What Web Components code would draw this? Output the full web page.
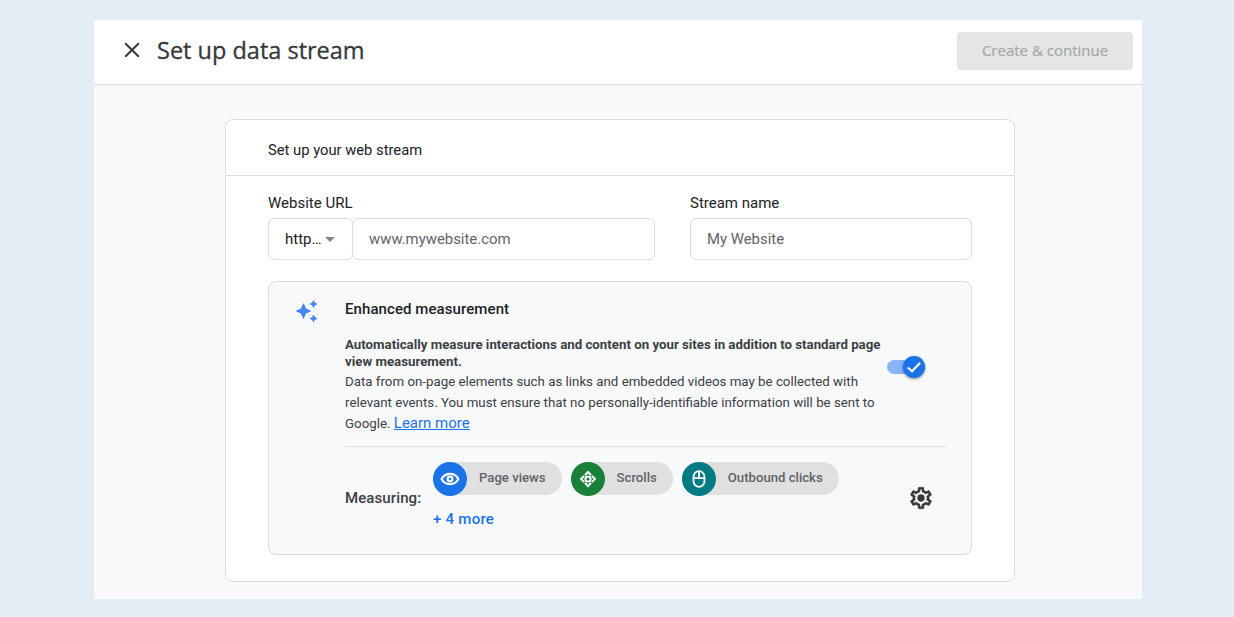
<!DOCTYPE html>
<html lang="en">
<head>
<meta charset="utf-8">
<title>Set up data stream</title>
<style>
  html, body { margin: 0; height: 100%; }
  body { background: #e4ecf6; font-family: Roboto, "Liberation Sans", sans-serif; overflow: hidden; }
</style>
</head>
<body>
<ga-page>
  <ga-header slot="header" title-text="Set up data stream" action="Create &amp; continue"></ga-header>
  <ga-card card-title="Set up your web stream">
    <div style="display:grid;grid-template-columns:387px 282px;column-gap:35px">
      <ga-field label="Website URL">
        <ga-select value="http…"></ga-select>
        <ga-input placeholder="www.mywebsite.com" style="flex:1;margin-left:-1px"></ga-input>
      </ga-field>
      <ga-field label="Stream name">
        <ga-input placeholder="My Website" style="flex:1"></ga-input>
      </ga-field>
    </div>
    <ga-measurement></ga-measurement>
  </ga-card>
</ga-page>

<script>
class GaPage extends HTMLElement {
  constructor() {
    super();
    this.attachShadow({ mode: 'open' });
    this.shadowRoot.innerHTML = `
      <style>
        :host { display: block; padding: 20px 92px 18px 94px; height: 579px; }
        .panel { height: 100%; background: #f8f9fb; display: flex; flex-direction: column; }
        .body { padding: 34px 127px 0 131px; }
      </style>
      <div class="panel">
        <slot name="header"></slot>
        <div class="body"><slot></slot></div>
      </div>
    `;
  }
}

class GaHeader extends HTMLElement {
  constructor() {
    super();
    this.attachShadow({ mode: 'open' });
  }

  connectedCallback() {
    const title = this.getAttribute('title-text');
    const action = this.getAttribute('action');
    this.shadowRoot.innerHTML = `
      <style>
        :host { display: block; }
        .bar {
          height: 64px;
          background: #fff;
          border-bottom: 1px solid #dadce0;
          display: flex;
          align-items: center;
          padding: 0 9px 0 25px;
        }
        svg { width: 26px; height: 26px; display: block; fill: #3c4043; margin-bottom: 4px; }
        h1 {
          margin: 0 0 5px 12px;
          font: 400 23.5px "Open Sans", Roboto, sans-serif;
          -webkit-text-stroke: .3px #35383b;
          color: #35383b;
          flex: 1;
        }
        button {
          width: 176px;
          height: 38px;
          margin-bottom: 2px;
          border: 0;
          border-radius: 4px;
          background: #e4e6e6;
          color: #a5a7a8;
          font: 500 15px "Open Sans", Roboto, sans-serif;
          -webkit-text-stroke: .2px #a5a7a8;
          padding: 0 0 2px;
        }
      </style>
      <div class="bar">
        <svg viewBox="0 0 24 24"><path d="M19 6.410 17.590 5 12 10.590 6.410 5 5 6.410 10.590 12 5 17.590 6.410 19 12 13.410 17.590 19 19 17.590 13.410 12z"/></svg>
        <h1>${title}</h1>
        <button disabled>${action}</button>
      </div>
    `;
  }
}

class GaCard extends HTMLElement {
  constructor() {
    super();
    this.attachShadow({ mode: 'open' });
  }

  connectedCallback() {
    this.shadowRoot.innerHTML = `
      <style>
        :host { display: block; }
        .card {
          background: #fff;
          border: 1px solid #dadce0;
          border-radius: 8px;
          height: 461px;
        }
        .head {
          height: 56px;
          box-sizing: border-box;
          display: flex;
          align-items: center;
          padding: 4px 42px 0;
          border-bottom: 1px solid #dadce0;
          font-size: 14.75px;
          color: #202124;
        }
        .content { padding: 18px 42px 0; }
      </style>
      <div class="card">
        <div class="head">${this.getAttribute('card-title')}</div>
        <div class="content"><slot></slot></div>
      </div>
    `;
  }
}

class GaField extends HTMLElement {
  constructor() {
    super();
    this.attachShadow({ mode: 'open' });
  }

  connectedCallback() {
    this.shadowRoot.innerHTML = `
      <style>
        :host { display: block; }
        label { display: block; font-size: 15px; line-height: 18px; color: #202124; margin-bottom: 6px; }
        .row { display: flex; }
      </style>
      <label>${this.getAttribute('label')}</label>
      <div class="row"><slot></slot></div>
    `;
  }
}

class GaSelect extends HTMLElement {
  constructor() {
    super();
    this.attachShadow({ mode: 'open' });
  }

  connectedCallback() {
    this.shadowRoot.innerHTML = `
      <style>
        :host { display: block; position: relative; z-index: 1; }
        .box {
          width: 85px;
          height: 42px;
          box-sizing: border-box;
          background: #fff;
          border: 1px solid #dadce0;
          border-radius: 6px;
          display: flex;
          align-items: center;
          padding-left: 16px;
          font-size: 15px;
          color: #202124;
        }
        span { width: 37px; flex: none; }
        i { width: 0; height: 0; margin-left: 3px; border: 5px solid transparent; border-top-color: #80868b; border-bottom: 0; }
      </style>
      <div class="box"><span>${this.getAttribute('value')}</span><i></i></div>
    `;
  }
}

class GaInput extends HTMLElement {
  constructor() {
    super();
    this.attachShadow({ mode: 'open' });
  }

  connectedCallback() {
    this.shadowRoot.innerHTML = `
      <style>
        :host { display: block; }
        .box {
          height: 42px;
          box-sizing: border-box;
          background: #fff;
          border: 1px solid #dadce0;
          border-radius: 6px;
          display: flex;
          align-items: center;
          padding-left: 16px;
          font-size: 14.9px;
          color: #5f6368;
        }
      </style>
      <div class="box">${this.getAttribute('placeholder')}</div>
    `;
  }
}

class GaToggle extends HTMLElement {
  constructor() {
    super();
    this.attachShadow({ mode: 'open' });
    this.shadowRoot.innerHTML = `
      <style>
        :host { display: block; position: relative; width: 38px; height: 22px; }
        .track { position: absolute; left: 0; top: 4px; width: 34px; height: 14px; border-radius: 7px; background: #8ab4f8; }
        .knob {
          position: absolute; right: 0; top: 0; width: 22px; height: 22px; border-radius: 50%;
          background: #1a73e8; box-shadow: 0 1px 3px rgba(0,0,0,.45);
          display: flex; align-items: center; justify-content: center;
        }
        svg { width: 16px; height: 16px; fill: none; stroke: #fff; stroke-width: 2.2; }
      </style>
      <div class="track"></div>
      <div class="knob"><svg viewBox="0 0 16 16"><path d="M1.800 8.500 6 12.300 14.200 3.800"/></svg></div>
    `;
  }
}

class GaChip extends HTMLElement {
  constructor() {
    super();
    this.attachShadow({ mode: 'open' });
  }

  connectedCallback() {
    this.shadowRoot.innerHTML = `
      <style>
        :host { display: block; }
        .chip {
          height: 33px;
          border-radius: 17px;
          background: #e0e0e0;
          display: flex;
          align-items: center;
          padding-right: 16px;
          font-size: 13.15px;
          font-weight: 500;
          color: #5f6368;
        }
        .icon {
          width: 34px; height: 34px; border-radius: 50%;
          display: flex; align-items: center; justify-content: center;
          margin-right: 12px;
          background: ${this.getAttribute('color')};
        }
        ::slotted(svg) { display: block; width: 24px; height: 24px; }
        span { margin-top: -2px; }
      </style>
      <div class="chip">
        <div class="icon"><slot></slot></div>
        <span>${this.getAttribute('label')}</span>
      </div>
    `;
  }
}

class GaMeasurement extends HTMLElement {
  constructor() {
    super();
    this.attachShadow({ mode: 'open' });
    this.shadowRoot.innerHTML = `
      <style>
        :host { display: block; margin-top: 21px; }
        .panel {
          height: 272px;
          background: #f8f9fb;
          border: 1px solid #dadce0;
          border-radius: 8px;
          display: flex;
          padding: 0 25px 0 25px;
        }
        .spark { width: 26px; height: 26px; margin-top: 17px; margin-right: 25px; flex: none; fill: #4285f4; }
        .main { flex: 1; padding-top: 18px; min-width: 0; }
        h2 { margin: 0; font-size: 15px; line-height: 18px; font-weight: 500; letter-spacing: .08px; color: #202124; }
        .desc { display: flex; align-items: flex-start; margin-top: 18px; }
        .text { width: 540px; flex: none; font-size: 13.3px; line-height: 21px; color: #3c4043; }
        .text b { display: block; font-size: 13.27px; line-height: 17px; font-weight: 700; margin-bottom: 1px; }
        .text a { font-size: 15px; color: #1a73e8; text-decoration: underline; }
        ga-toggle { margin: 20px 0 0 2px; }
        hr { border: 0; border-top: 1px solid #dadce0; margin: 12px 0 0; }
        .measuring { display: flex; align-items: center; margin-top: 15px; }
        .label { font-size: 15px; font-weight: 500; letter-spacing: .1px; color: #3c4043; width: 88px; flex: none; margin-top: 6px; }
        .chips { display: flex; gap: 9px; }
        .more { margin-top: 15px; font-size: 15px; font-weight: 500; letter-spacing: .25px; color: #1a73e8; line-height: 18px; }
        .gear { width: 26px; height: 26px; fill: #35383b; stroke: #35383b; stroke-width: .4; margin: 6px 12px 0 auto; flex: none; }
      </style>
      <div class="panel">
        <svg class="spark" viewBox="0 0 26 26">
          <path d="M9.500 4 12.100 9.400 17.500 12 12.100 14.600 9.500 20 6.900 14.600 1.500 12 6.900 9.400z"/>
          <path d="M19.500 1 20.900 3.600 23.500 5 20.900 6.400 19.500 9 18.100 6.400 15.500 5 18.100 3.600z"/>
          <path d="M19.500 15.500 20.900 18.100 23.500 19.500 20.900 20.900 19.500 23.500 18.100 20.900 15.500 19.500 18.100 18.100z"/>
        </svg>
        <div class="main">
          <h2>Enhanced measurement</h2>
          <div class="desc">
            <div class="text">
              <b>Automatically measure interactions and content on your sites in addition to standard page view measurement.</b>
              <span>Data from on-page elements such as links and embedded videos may be collected with relevant events. You must ensure that no personally-identifiable information will be sent to</span>
              <span>Google.</span> <a>Learn more</a>
            </div>
            <ga-toggle></ga-toggle>
          </div>
          <hr>
          <div class="measuring">
            <div class="label">Measuring:</div>
            <div>
              <div class="chips">
                <ga-chip label="Page views" color="#1a73e8">
                  <svg viewBox="0 0 24 24" fill="none" stroke="#fff" stroke-width="2.100"><path d="M3.600 12C5.400 8.500 8.500 6.900 12 6.900s6.600 1.600 8.400 5.100c-1.800 3.500-4.900 5.100-8.400 5.100S5.400 15.500 3.600 12z"/><circle cx="12" cy="12" r="2.400"/></svg>
                </ga-chip>
                <ga-chip label="Scrolls" color="#188038">
                  <svg viewBox="0 0 24 24" fill="none" stroke="#fff" stroke-width="2"><path d="M8.900 8.100 12 5 15.100 8.100M15.900 8.900 19 12 15.900 15.100M15.100 15.900 12 19 8.900 15.900M8.100 15.100 5 12 8.100 8.900"/><circle cx="12" cy="12" r="2.600"/></svg>
                </ga-chip>
                <ga-chip label="Outbound clicks" color="#007b83">
                  <svg viewBox="0 0 24 24" fill="none" stroke="#fff" stroke-width="1.800"><rect x="6.500" y="4.200" width="11" height="15.600" rx="5.500"/><path d="M12 4.200V11M6.500 11.200H17.500"/></svg>
                </ga-chip>
              </div>
              <div class="more">+ 4 more</div>
            </div>
            <svg class="gear" viewBox="0 0 24 24"><path d="M19.430 12.980c.04-.32.07-.64.07-.98s-.03-.66-.07-.98l2.110-1.650c.19-.15.24-.42.12-.64l-2-3.460c-.12-.22-.39-.3-.61-.22l-2.490 1c-.52-.4-1.080-.73-1.690-.98l-.38-2.650A.488.488 0 0 0 14 2h-4c-.25 0-.46.18-.49.42l-.38 2.650c-.61.25-1.170.59-1.690.98l-2.490-1c-.23-.09-.49 0-.61.22l-2 3.460c-.13.22-.07.49.12.64l2.110 1.650c-.04.32-.07.65-.07.98s.03.66.07.98l-2.110 1.650c-.19.15-.24.42-.12.64l2 3.460c.12.22.39.3.61.22l2.490-1c.52.4 1.080.73 1.690.98l.38 2.650c.03.24.24.42.49.42h4c.25 0 .46-.18.49-.42l.38-2.650c.61-.25 1.170-.59 1.690-.98l2.490 1c.23.09.49 0 .61-.22l2-3.460c.12-.22.07-.49-.12-.64l-2.110-1.650zM17.450 11.270c.04.31.05.52.05.73s-.02.43-.05.73l-.14 1.130.89.7 1.080.84-.7 1.210-1.270-.51-1.040-.42-.9.68c-.43.32-.84.56-1.250.73l-1.060.43-.16 1.130-.2 1.350h-1.400l-.19-1.350-.16-1.130-1.060-.43c-.43-.18-.83-.41-1.230-.71l-.91-.7-1.060.43-1.270.51-.7-1.210 1.080-.84.89-.7-.14-1.130c-.03-.31-.05-.54-.05-.74s.02-.43.05-.73l.14-1.130-.89-.7-1.080-.84.7-1.210 1.270.51 1.040.42.9-.68c.43-.32.84-.56 1.250-.73l1.060-.43.16-1.130.2-1.350h1.390l.19 1.350.16 1.130 1.060.43c.43.18.83.41 1.230.71l.91.7 1.060-.43 1.270-.51.7 1.210-1.070.85-.89.7.14 1.130z"/><circle cx="12" cy="12" r="3.200"/></svg>
          </div>
        </div>
      </div>
    `;
  }
}

customElements.define('ga-page', GaPage);
customElements.define('ga-header', GaHeader);
customElements.define('ga-card', GaCard);
customElements.define('ga-field', GaField);
customElements.define('ga-select', GaSelect);
customElements.define('ga-input', GaInput);
customElements.define('ga-toggle', GaToggle);
customElements.define('ga-chip', GaChip);
customElements.define('ga-measurement', GaMeasurement);
</script>
</body>
</html>
